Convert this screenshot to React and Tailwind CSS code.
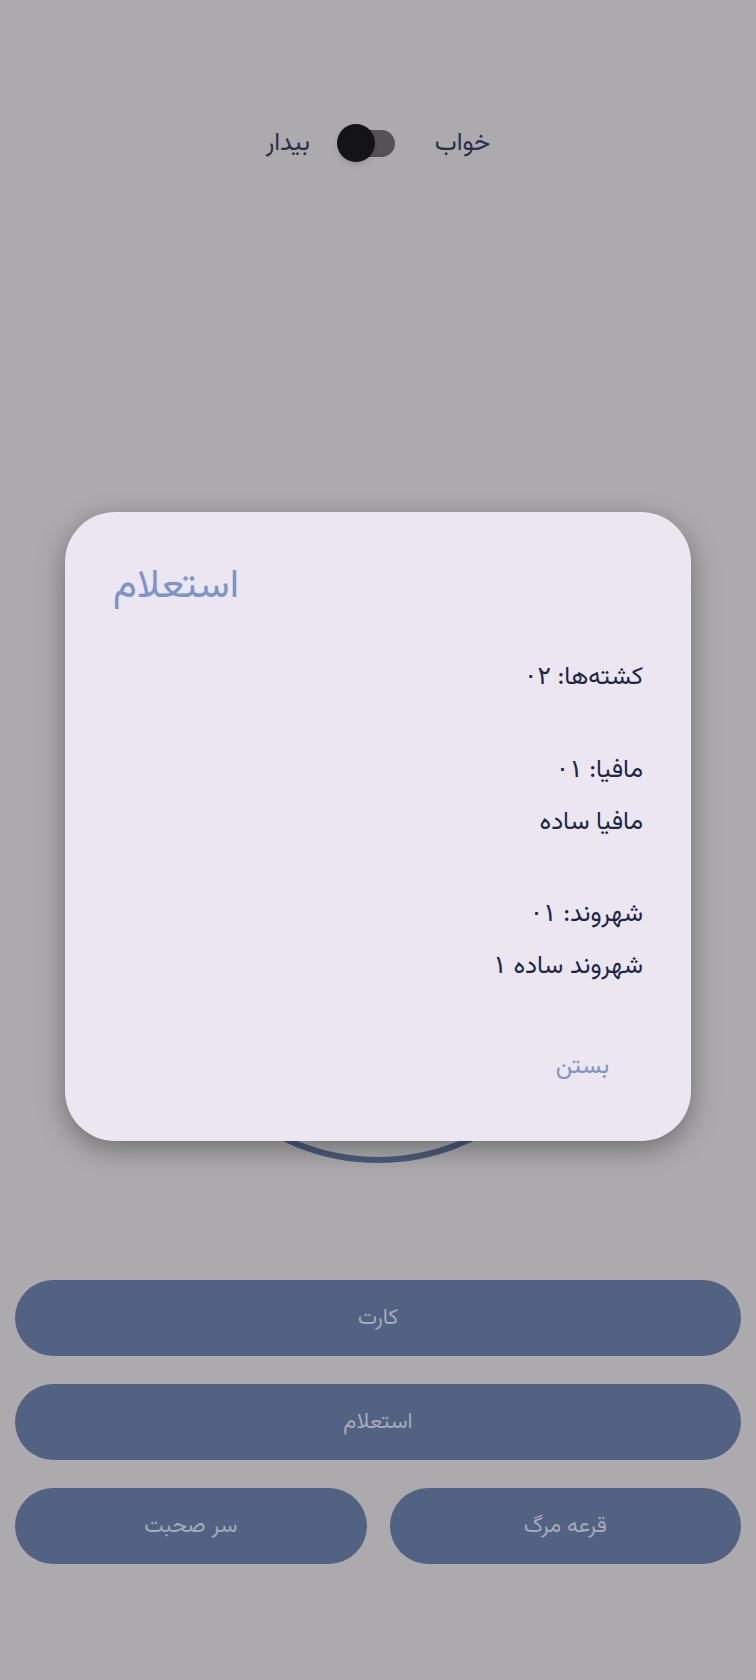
import React, { useState } from 'react';

const FONT = { fontFamily: '"Vazirmatn", "Noto Sans Arabic", "DejaVu Sans", sans-serif' };
const DIGITS = { fontFamily: '"DejaVu Sans", sans-serif', lineHeight: 1, letterSpacing: '-2px' };

const ActionButton = ({ label }) => (
  <button className="h-[76px] w-full rounded-full bg-[#526282] text-[22px] text-[#a6a9b7]">
    {label}
  </button>
);

const App = () => {
  const [awake] = useState(true);

  return (
    <div dir="ltr" style={FONT} className="relative h-[1680px] w-[756px] overflow-hidden bg-[#acaaad]">
      {/* sleep / awake switch */}
      <div className="flex h-[40px] items-center justify-center pt-[123px] box-content">
        <span className="mr-[25px] text-[25px] leading-none text-[#27304b]">بیدار</span>
        <div className="relative flex h-[38px] w-[60px] items-center">
          <div className="ml-[3px] h-[27px] w-[57px] rounded-full bg-[#545257]" />
          <div className={`absolute top-0 h-[38px] w-[38px] rounded-full bg-[#141416] shadow-md ${awake ? 'left-[2px]' : 'right-0'}`} />
        </div>
        <span className="ml-[40px] text-[25px] leading-none text-[#27304b]">خواب</span>
      </div>

      {/* timer ring */}
      <div className="mt-[564px] flex justify-center">
        <div className="h-[436px] w-[436px] rounded-full border-[6px] border-[#4c5b7d]" />
      </div>

      {/* actions */}
      <div dir="rtl" className="mt-[117px] flex flex-col gap-[28px] px-[15px]">
        <ActionButton label="کارت" />
        <ActionButton label="استعلام" />
        <div className="grid grid-cols-2 gap-[23px]">
          <ActionButton label="قرعه مرگ" />
          <ActionButton label="سر صحبت" />
        </div>
      </div>

      {/* inquiry dialog */}
      <div className="absolute left-[65px] top-[512px] flex h-[629px] w-[626px] flex-col rounded-[50px] bg-[#ebe6f0] px-[48px] shadow-[0_8px_28px_rgba(0,0,0,0.35)]">
        <div className="pt-[47px] text-left text-[40px] leading-[56px] text-[#7d95c6]">استعلام</div>

        <div dir="rtl" className="mt-[37px] text-right text-[25px] leading-[52px] text-[#1c2648]">
          <div>کشته‌ها: <span style={DIGITS}>۰۲</span></div>
          <div className="mt-[41px]">مافیا: <span style={DIGITS}>۰۱</span></div>
          <div>مافیا ساده</div>
          <div className="mt-[40px]">شهروند: <span style={DIGITS}>۰۱</span></div>
          <div>شهروند ساده <span style={DIGITS}>۱</span></div>
        </div>

        <div className="mt-[50px] flex justify-end">
          <button className="mr-[12px] h-[48px] px-[22px] text-[24px] text-[#7d95c6]">بستن</button>
        </div>
      </div>
    </div>
  );
};

export default App;
